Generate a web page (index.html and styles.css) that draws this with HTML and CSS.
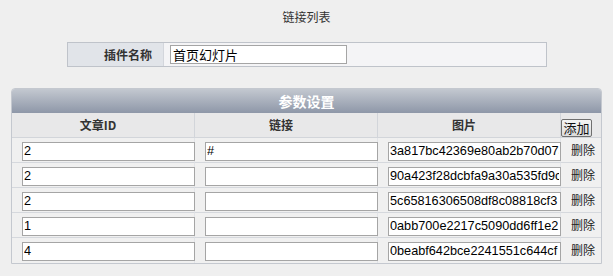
FILE: index.html
```html
<!DOCTYPE html>
<html lang="zh-CN">
<head>
<meta charset="utf-8">
<title>链接列表</title>
<link rel="stylesheet" href="styles.css">
</head>
<body>
<div class="page">
  <div class="title">链接列表</div>
  <div class="plugin">
    <div class="plugin-label">插件名称</div>
    <div class="plugin-value"><input class="txt name" type="text" value="首页幻灯片"></div>
  </div>
  <div class="panel">
    <div class="panel-head">参数设置</div>
    <div class="grid">
      <div class="th">文章ID</div>
      <div class="th">链接</div>
      <div class="th">图片</div>
      <div class="th th-btn"><button class="add" type="button">添加</button></div>

      <div class="td"><input class="txt" type="text" value="2"></div>
      <div class="td"><input class="txt" type="text" value="#"></div>
      <div class="td"><input class="txt" type="text" value="3a817bc42369e80ab2b70d07a1"></div>
      <div class="td del">删除</div>

      <div class="td"><input class="txt" type="text" value="2"></div>
      <div class="td"><input class="txt" type="text" value=""></div>
      <div class="td"><input class="txt" type="text" value="90a423f28dcbfa9a30a535fd9c"></div>
      <div class="td del">删除</div>

      <div class="td"><input class="txt" type="text" value="2"></div>
      <div class="td"><input class="txt" type="text" value=""></div>
      <div class="td"><input class="txt" type="text" value="5c65816306508df8c08818cf3"></div>
      <div class="td del">删除</div>

      <div class="td"><input class="txt" type="text" value="1"></div>
      <div class="td"><input class="txt" type="text" value=""></div>
      <div class="td"><input class="txt" type="text" value="0abb700e2217c5090dd6ff1e2"></div>
      <div class="td del">删除</div>

      <div class="td last"><input class="txt" type="text" value="4"></div>
      <div class="td last"><input class="txt" type="text" value=""></div>
      <div class="td last"><input class="txt" type="text" value="0beabf642bce2241551c644cf"></div>
      <div class="td del last">删除</div>
    </div>
  </div>
</div>
</body>
</html>
```
FILE: styles.css
```css
html, body {
  margin: 0;
  padding: 0;
  background: #efefef;
}
body {
  font-family: "Noto Sans CJK SC", "Liberation Sans", sans-serif;
  font-size: 12px;
  color: #333;
}
.page {
  width: 613px;
  height: 276px;
  overflow: hidden;
}
.title {
  height: 42px;
  line-height: 34px;
  text-align: center;
  font-size: 12px;
  color: #333;
}
.plugin {
  margin-left: 67px;
  width: 478px;
  height: 23px;
  border: 1px solid #bfc3ca;
  display: flex;
  background: #f4f4f6;
}
.plugin-label {
  width: 84px;
  padding-right: 11px;
  background: #e1e4e9;
  border-right: 1px solid #d3d6dc;
  text-align: right;
  font-weight: bold;
  line-height: 23px;
  color: #333;
}
.plugin-value {
  padding: 2px 0 0 6px;
}
.txt {
  box-sizing: border-box;
  height: 19px;
  width: 173px;
  margin: 0;
  padding: 0 1px;
  border: 1px solid #a5a5a5;
  background: #fff;
  font-family: "Liberation Sans", Arial, sans-serif;
  font-size: 12.7px;
  color: #000;
  outline: none;
}
.txt.name {
  width: 177px;
  padding: 0 2px;
  font-family: "Noto Sans CJK SC", sans-serif;
  font-size: 13px;
  line-height: 17px;
}
.panel {
  margin-top: 21px;
  margin-left: 11px;
  width: 589px;
  border: 1px solid #c4c8cf;
  border-radius: 4px 4px 0 0;
  overflow: hidden;
}
.panel-head {
  height: 24px;
  line-height: 24px;
  text-align: center;
  color: #fff;
  font-weight: bold;
  font-size: 14px;
  background: linear-gradient(#c3c8d0, #8e97a8);
}
.grid {
  display: grid;
  grid-template-columns: 183px 183px 183px 40px;
  grid-auto-rows: 25px;
}
.th {
  box-sizing: border-box;
  background: #e8e8e9;
  border-bottom: 1px solid #d2d5da;
  border-right: 1px solid #d2d5da;
  text-align: center;
  font-weight: bold;
  line-height: 24px;
  padding-right: 10px;
  color: #333;
}
.th-btn {
  border-right: 0;
  padding: 3px 0 0 0;
  text-align: left;
}
.add {
  box-sizing: border-box;
  height: 18px;
  width: 31px;
  padding: 0;
  margin: 0;
  border: 1px solid #6f6f6f;
  border-radius: 2px;
  background: linear-gradient(#f4f4f4, #dcdcdc);
  font-family: "Noto Sans CJK SC", sans-serif;
  font-size: 13px;
  line-height: 15px;
  color: #111;
}
.td {
  box-sizing: border-box;
  background: #f0f0f0;
  border-bottom: 1px solid #d5d8dd;
  border-right: 1px solid #e2e4e8;
  padding: 3px 0 0 10px;
}
.td.last {
  border-bottom: 0;
}
.td.del {
  border-right: 0;
  padding: 0 0 0 10px;
  line-height: 24px;
  color: #222;
}
```
